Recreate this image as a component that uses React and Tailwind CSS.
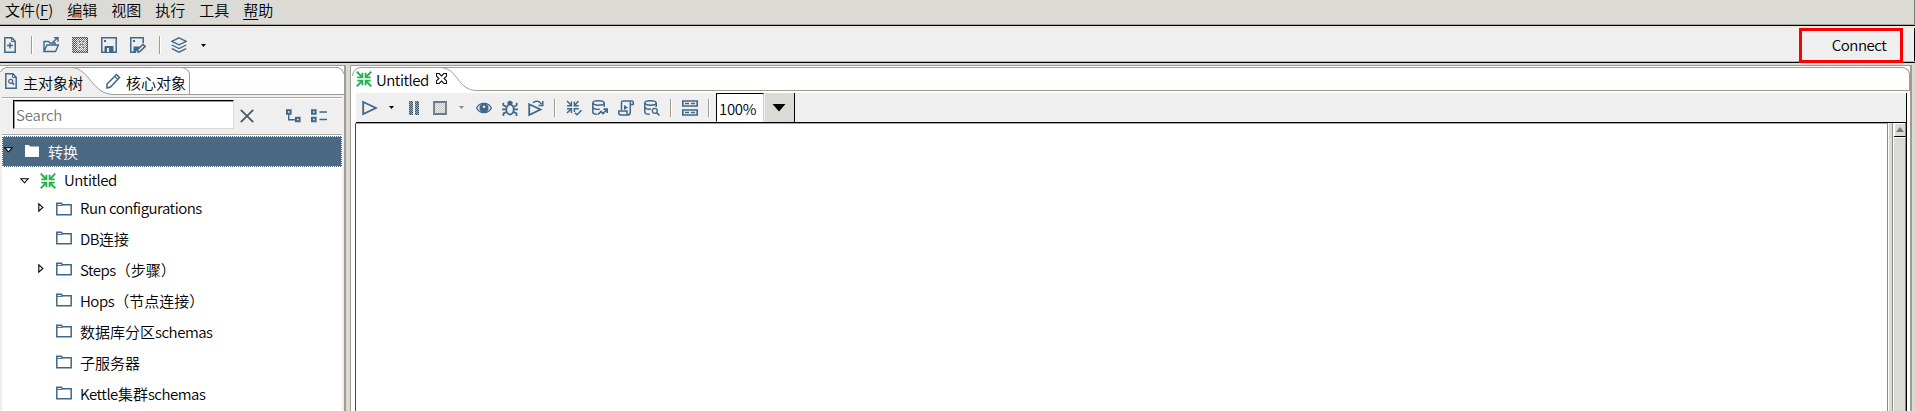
import React from 'react';

const BLUE = '#3f6789';

function Icon({ className = '', children, w = 16, h = 16, ...rest }) {
  return (
    <svg width={w} height={h} viewBox={`0 0 ${w} ${h}`} fill="none" stroke={BLUE} strokeWidth="1.5" className={`shrink-0 ${className}`} {...rest}>
      {children}
    </svg>
  );
}

const Dither = ({ id, color = '#2b3f55' }) => (
  <defs>
    <pattern id={id} width="2" height="2" patternUnits="userSpaceOnUse">
      <path d="M0 0h1v1H0zM1 1h1v1H1z" fill={color} stroke="none" shapeRendering="crispEdges" />
    </pattern>
  </defs>
);

const NewFile = () => (
  <Icon w={12}><path d="M.8.8h7l3.4 3.4v11H.8z" /><path d="M7.5 1v3.5H11" strokeWidth="1" /><path d="M6 5.5v6M3 8.5h6" /></Icon>
);
const Open = () => (
  <Icon><path d="M1 14.5V4.5h4.5L7 6h5v2M1 14.5h11.5L15.5 8H4z" strokeWidth="1.4" /><path d="M9.5 5.5 14.5 1M11 .8h4v4" strokeWidth="1.4" /></Icon>
);
const Explore = () => (
  <Icon><Dither id="dExp" color="#3c4c60" />
    <path d="M0 0h16v16H0z" fill="url(#dExp)" stroke="none" />
    <path d="M.7.7h14.6v14.6H.7z" stroke="#50647a" strokeWidth="1" strokeDasharray="1 1" />
    <path d="M5 2.5h9v11H5z" fill="#efefef" fillOpacity=".45" stroke="none" />
    <path d="M7 4.5h6M7 7.5h6M7 10.5h6" stroke="#63768a" strokeWidth="1" strokeDasharray="2 1" /></Icon>
);
const Save = () => (
  <Icon><path d="M.8.8h14.4v14.4H.8z" /><path d="M4 15V9.5h8V15z" fill={BLUE} strokeWidth="1" /><path d="M6 11h2v4H6z" fill="#efefef" stroke="none" /><path d="M3 3h2v2H3z" fill={BLUE} stroke="none" /></Icon>
);
const SaveAs = () => (
  <Icon><path d="M6 15.2H.8V.8h12.4V6" /><path d="M3 3h2v2H3z" fill={BLUE} stroke="none" /><path d="M3.5 9.5H10L6 15H3.5z" fill={BLUE} stroke="none" /><path d="M8 15.2v-3l5-5 2.2 2.2-5 5z" fill="#efefef" strokeWidth="1.5" /></Icon>
);
const Layers = () => (
  <Icon><path d="M8 .8 15.2 4.3 8 7.8.8 4.3z" strokeWidth="1.3" /><path d="M.8 8 8 11.5 15.2 8M.8 11.7 8 15.2l7.2-3.5" strokeWidth="1.3" /></Icon>
);
const FileSearch = () => (
  <Icon w={12}><path d="M.8.8h7l3.4 3.4v11H.8z" /><path d="M7.5 1v3.5H11" strokeWidth="1" /><circle cx="5.7" cy="8.3" r="2" strokeWidth="1.2" /><path d="m7.2 9.8 2 2" /></Icon>
);
const Pencil = () => (
  <Icon w={15}><path d="M1 15v-4L10.5 1.5l3 3L4.5 14z" strokeWidth="1.5" /><path d="m8.7 3.3 3 3" strokeWidth="1.2" /></Icon>
);
const Clear = () => (
  <Icon w={14} h={14}><path d="m.8.8 12.4 12.4M13.2.8.8 13.2" stroke="#4a5865" strokeWidth="1.8" /></Icon>
);
const Expand = () => (
  <Icon w={15} h={14}><path d="M1 1.2h3.6v3.6H1zM10 8.7h3.6v3.6H10z" strokeWidth="2" /><path d="M2.7 5v5.8H9" strokeWidth="1.4" /></Icon>
);
const Collapse = () => (
  <Icon w={17} h={14}><path d="M1 1.2h3.6v3.6H1zM1 8.7h3.6v3.6H1z" strokeWidth="2" /><path d="M8.5 3H16M8.5 10.5H16" strokeWidth="1.4" /></Icon>
);
const Converge = () => (
  <Icon stroke="#22b14c" strokeWidth="1.9">
    <path d="M.7.7 6 6M15.3.7 10 6M.7 15.3 6 10M15.3 15.3 10 10" />
    <path d="M6.4 1.8v4.6H1.3M9.6 1.8v4.6h5.1M6.4 14.2V9.6H1.3M9.6 14.2V9.6h5.1" />
  </Icon>
);
const Verify = () => (
  <Icon strokeWidth="1.5">
    <path d="m1 1 4 4M12.5 1 9 5M1 13l4-4" />
    <path d="M5.4 1.5v4.2H1M8.4 1.5v4.2h4.4M5.4 13V8.8H1M8.4 12V8.8h4.4" />
    <path d="m9 12.8 2 2 4.5-4.6" />
  </Icon>
);
const Folder = ({ solid }) =>
  solid ? (
    <Icon w={14} h={12} stroke="none" fill="#fff"><path d="M0 0h4l1 1.500h9V12H0z" /></Icon>
  ) : (
    <Icon h={14}><path d="M.8 12.7V1.2h4.5l1.2 1.6h8.7v9.9z" strokeWidth="1.5" /><path d="M1 3.4h5L7 2.6" strokeWidth="1" /></Icon>
  );
const Play = () => (
  <Icon><path d="M1.2 2 14 8 1.2 14z" strokeWidth="1.8" /></Icon>
);
const Pause = () => (
  <Icon w={10} h={14}><Dither id="dPau" color="#3f556b" /><path d="M0 0h4v14H0zM6 0h4v14H6z" fill="#9aa9b7" stroke="none" /><path d="M0 0h4v14H0zM6 0h4v14H6z" fill="url(#dPau)" stroke="none" /></Icon>
);
const Stop = () => (
  <Icon w={14} h={14}><Dither id="dSto" color="#c4c4c4" /><path d="M1 1h12v12H1z" fill="url(#dSto)" stroke="#6b7987" strokeWidth="1.8" /></Icon>
);
const Eye = () => (
  <Icon><path d="M.7 8C3.5 1.9 12.5 1.9 15.3 8 12.5 14.1 3.5 14.1.7 8z" fill="#efefef" strokeWidth="1.3" /><circle cx="8" cy="8" r="4.6" fill={BLUE} stroke="none" /><circle cx="8" cy="6.8" r="1.3" fill="#dfe7ee" stroke="none" /></Icon>
);
const Bug = () => (
  <Icon><ellipse cx="8" cy="9.5" rx="3.7" ry="5" strokeWidth="1.8" /><path d="M5.5 4.5V2.2L7 .8h2l1.5 1.4v2.3z" fill={BLUE} stroke="none" /><path d="M1.3 2.8v2.4l3 1.6M14.7 2.8v2.4l-3 1.6M0 9.3h4M12 9.3h4M4.5 12l-3 1.4V16M11.5 12l3 1.4V16" strokeWidth="1.7" /></Icon>
);
const Replay = () => (
  <Icon><path d="M1.2 4.2 12.5 9.500 1.2 15z" strokeWidth="1.8" /><path d="M5 2.700c3-2.500 6.500-2 8.500 1.500M14.800 1v4.500h-4.300" strokeWidth="1.5" /></Icon>
);
const DbRun = () => (
  <Icon><ellipse cx="6.5" cy="3" rx="5.7" ry="2.2" strokeWidth="1.5" /><path d="M.8 3v9c0 1.3 2 2.2 4.5 2.3M12.2 3v4M.8 7.5c1.5 1.8 5 2.2 7 1.6" strokeWidth="1.5" /><path d="m6 14.5 3-3 2 2 4-4M11.5 9.2h3.8V13" strokeWidth="1.7" /></Icon>
);
const Script = () => (
  <Icon><path d="M3.5 10V2.5C3.5 1.5 4 .9 5 .9h9c1 0 1.3.6 1.3 1.5v2h-3M12.3 2v9.8c0 2-.8 3.2-2.3 3.2H2.5C1 15 .8 14 .8 12.8V11H9v2.5c0 .8.4 1.4 1.2 1.4" strokeWidth="1.5" /><path d="M6 5v5l4-2.5z" fill={BLUE} stroke="none" /></Icon>
);
const DbSearch = () => (
  <Icon><ellipse cx="6.5" cy="3" rx="5.7" ry="2.2" strokeWidth="1.5" /><path d="M.8 3v9c0 1.3 2 2.3 5 2.3M12.2 3v4M.8 7.5c1.5 1.5 4 2 6 1.6" strokeWidth="1.5" /><circle cx="10.8" cy="10.8" r="2.5" strokeWidth="1.3" /><path d="m12.6 12.6 2.8 2.8" /></Icon>
);
const Results = () => (
  <Icon><path d="M.8 1h14.4v5H.8zM.8 10h14.4v5H.8z" strokeWidth="1.7" /><path d="M3 3.5h4M9 3.5h4M3 12.5h4M9 12.5h4" strokeWidth="1.5" /></Icon>
);
const Caret = ({ color = '#000', w = 5 }) => (
  <svg width={w} height="3" viewBox="0 0 5 3" className="shrink-0"><path d="M0 0h5L2.5 3z" fill={color} /></svg>
);
const CloseTab = () => (
  <Icon w={11} h={11} stroke="#111" strokeWidth="1.1"><path d="M.5.5h2.6l2.4 2.4L7.9.5h2.6v2.6L8.1 5.500l2.400 2.400v2.600H7.900L5.500 8.100l-2.400 2.400H.5V7.900l2.400-2.400L.5 3.100z" /></Icon>
);
const Sep = ({ className = '' }) => <div className={`h-[18px] w-[2px] shrink-0 border-l border-[#a09c90] bg-white ${className}`} />;

const Twisty = ({ open }) =>
  open ? (
    <Icon w={9} h={6} stroke="#000" strokeWidth="1.1" fill="#fff"><path d="M.8.8h7.4L4.5 4.8z" /></Icon>
  ) : (
    <Icon w={6} h={9} stroke="#000" strokeWidth="1.1"><path d="M.8.8v7.4L4.8 4.5z" /></Icon>
  );

/* Latin runs are set tighter than the Chinese glyphs around them. */
function Label({ children }) {
  return children
    .split(/([A-Za-z ]+)/)
    .filter(Boolean)
    .map((part, i) => (/[A-Za-z]/.test(part) ? <span key={i} className="tracking-[-0.48px]">{part}</span> : <span key={i}>{part}</span>));
}

const rows = [
  { label: 'Run configurations', twisty: true, cls: 'h-[29px]', text: 'mb-[2px]' },
  { label: 'DB连接', cls: 'h-[31px] pb-px', text: '' },
  { label: 'Steps（步骤）', twisty: true, cls: 'h-[31px] pb-px', text: '' },
  { label: 'Hops（节点连接）', cls: 'h-[31px] pb-px', text: '' },
  { label: '数据库分区schemas', cls: 'h-[31px] pb-px', text: 'mt-px' },
  { label: '子服务器', cls: 'h-[31px] pb-px', text: 'mt-px' },
  { label: 'Kettle集群schemas', cls: 'h-[31px] pb-px', text: '' },
];

function MenuBar() {
  return (
    <div className="flex h-[26px] shrink-0 items-start gap-[14px] border-b border-black bg-[#dcdad5] pl-[5px] leading-[20px] shadow-[inset_0_-1px_0_#aaa79f,inset_-1px_0_0_#777]">
      <span>文件(<u className="underline-offset-[3px]">F</u>)</span>
      <span><u className="underline-offset-[3px]">编</u>辑</span>
      <span>视图</span>
      <span>执行</span>
      <span>工具</span>
      <span><u className="underline-offset-[3px]">帮</u>助</span>
    </div>
  );
}

function MainToolbar() {
  return (
    <div className="flex h-[37px] shrink-0 items-center border-t-2 border-b border-t-[#e9e9e3] border-b-black bg-[#efefef] pl-1 shadow-[inset_0_-1px_0_#b5b5ad,inset_-1px_0_0_#000]">
      <NewFile />
      <Sep className="ml-[15px]" />
      <div className="ml-[10px] flex gap-[13px]"><Open /><Explore /><Save /><SaveAs /></div>
      <Sep className="ml-[13px]" />
      <div className="ml-[10px] flex items-center gap-[14px]"><Layers /><Caret /></div>
      <div className="mr-[12px] ml-auto flex h-[35px] w-[104px] items-center justify-center border-[3px] border-[#fe0000] pb-px pl-[16px]"><span><Label>Connect</Label></span></div>
    </div>
  );
}

function LeftPanel() {
  return (
    <div className="flex w-[346px] shrink-0 flex-col border-t border-r-2 border-[#a09c92] bg-[#efefef]">
      <div className="relative flex h-[29px] shrink-0 bg-white">
        <svg width="344" height="29" viewBox="0 0 344 29" fill="none" className="absolute inset-0">
          <path d="M0 29V6Q1 2.5 6 1.5H72C90 3 92 28 114 28.5L114 29z" fill="#efefef" />
          <path d="M.5 6Q1.5 2.5 6 1.5H338Q343 3 344 8M72 1.5C90 3 92 28.5 114 28.5H344M182 1.5Q189.500 3 189.500 9V28" stroke="#a09c92" />
        </svg>
        <div className="relative flex flex-1 items-center pl-[5px]">
          <FileSearch />
          <span className="mt-[3px] ml-[6px]">主对象树</span>
          <span className="ml-[23px] flex"><Pencil /></span>
          <span className="mt-[3px] ml-[5px]">核心对象</span>
        </div>
      </div>
      <div className="mr-[2px] ml-[2px] flex min-h-0 flex-1 flex-col">
        <div className="mt-[2px] flex h-[37px] shrink-0 border-t border-[#adaaa4] pt-[2px] pl-[11px] shadow-[inset_0_1px_0_#fff]">
          <div className="flex h-[29px] w-[221px] items-center border border-t-black border-r-[#dcdad5] border-b-[#dcdad5] border-l-black bg-white pb-px pl-[2px] tracking-[-0.2px] text-[#777] shadow-[inset_1px_1px_0_#9a978f]">Search</div>
          <div className="ml-[6px] flex h-[31px] items-center"><Clear /></div>
          <div className="ml-[32px] flex h-[31px] items-center gap-[10px]"><Expand /><Collapse /></div>
        </div>
        <div className="flex min-h-0 flex-1 flex-col overflow-hidden border-t border-[#adaaa4] bg-white pt-px">
          <div className="flex h-[31px] shrink-0 items-center border border-dotted border-white bg-[#4b6983] pl-px text-white">
            <span className="mb-[4px]"><Twisty open /></span>
            <span className="mb-[2px] ml-[12px]"><Folder solid /></span>
            <span className="ml-[9px]">转换</span>
          </div>
          <div className="flex h-[27px] shrink-0 items-center pl-[18px]">
            <Twisty open />
            <span className="ml-[11px]"><Converge /></span>
            <span className="mb-[3px] ml-[8px]"><Label>Untitled</Label></span>
          </div>
          {rows.map((r) => (
            <div key={r.label} className={`flex shrink-0 items-center pl-[36px] ${r.cls}`}>
              <span className="mb-[2px] w-[18px]">{r.twisty && <Twisty />}</span>
              <Folder />
              <span className={`ml-[8px] whitespace-nowrap ${r.text}`}><Label>{r.label}</Label></span>
            </div>
          ))}
        </div>
      </div>
    </div>
  );
}

function RunToolbar() {
  return (
    <div className="mr-[3px] ml-[5px] flex h-[30px] shrink-0 items-center border-r border-b border-black bg-[#efefef] pl-[6px]">
      <Play /><span className="ml-[11px] flex"><Caret /></span>
      <span className="ml-[15px] flex"><Pause /></span>
      <span className="ml-[14px] flex"><Stop /></span>
      <span className="ml-[12px] flex"><Caret color="#888" /></span>
      <div className="ml-[12px] flex gap-[10px]"><Eye /><Bug /><Replay /></div>
      <Sep className="ml-[10px]" />
      <div className="ml-[10px] flex gap-[10px]"><Verify /><DbRun /><Script /><DbSearch /></div>
      <Sep className="ml-[10px]" />
      <span className="ml-[10px] flex"><Results /></span>
      <Sep className="ml-[10px]" />
      <div className="ml-[6px] flex h-[29px] w-[48px] items-center border border-t-black border-r-[#cfccc4] border-b-white border-l-black bg-white pt-[2px] pl-[2px] tracking-[-0.3px]">100%</div>
      <div className="ml-px flex h-[29px] w-[30px] items-center justify-center border-r border-black bg-[#dcdad5] pr-[2px]">
        <svg width="14" height="8" viewBox="0 0 14 8"><path d="M.5 0h13L7 7.500z" /></svg>
      </div>
    </div>
  );
}

function Editor() {
  return (
    <div className="ml-[4px] flex min-w-0 flex-1 flex-col border-t border-r-2 border-l border-[#a09c92] bg-white">
      <div className="relative flex h-[27px] shrink-0">
        <svg width="130" height="27" viewBox="0 0 130 27" fill="none" className="absolute inset-0">
          <path d="M1.500 10Q2 3 9 1.500H130M90 1.500C108 3 106 24.500 126 24.500H130" stroke="#a09c92" />
        </svg>
        <div className="relative flex w-[130px] items-center pb-[2px] pl-[5px]">
          <Converge /><span className="mt-px ml-[4px]"><Label>Untitled</Label></span><span className="ml-[7px] flex"><CloseTab /></span>
        </div>
        <div className="mt-px h-[24px] flex-1 rounded-tr-[8px] border-t border-r border-b border-[#a09c92]" />
      </div>
      <RunToolbar />
      <div className="mr-[3px] ml-[4px] flex min-h-0 flex-1">
        <div className="flex-1 border-t border-r border-l border-t-[#a9a69d] border-r-[#8f8c84] border-l-[#444] bg-white" />
        <div className="ml-px w-[3px] bg-[#dcdad5]" />
        <div className="flex w-[15px] flex-col border-r border-l border-r-black border-l-[#8f8c84] pl-px">
          <div className="flex h-[14px] items-center justify-center border-r border-b border-r-[#8f8c84] border-b-black bg-[#dcdad5] shadow-[inset_1px_1px_0_#fff]">
            <svg width="8" height="5" viewBox="0 0 8 5"><path d="M0 5h8L4 0z" fill="#777" /></svg>
          </div>
          <div className="flex-1 border-t border-r border-t-white border-r-[#8f8c84] bg-[#dcdad5]" />
        </div>
      </div>
    </div>
  );
}

export default function App() {
  return (
    <div className="flex h-[411px] w-[1915px] flex-col overflow-hidden bg-[#dcdad5] font-['Noto_Sans_CJK_SC','Noto_Sans',sans-serif] text-[15px] leading-none font-[350] text-black">
      <MenuBar />
      <MainToolbar />
      <div className="mt-[2px] mr-[3px] flex min-h-0 flex-1">
        <LeftPanel />
        <Editor />
      </div>
    </div>
  );
}
